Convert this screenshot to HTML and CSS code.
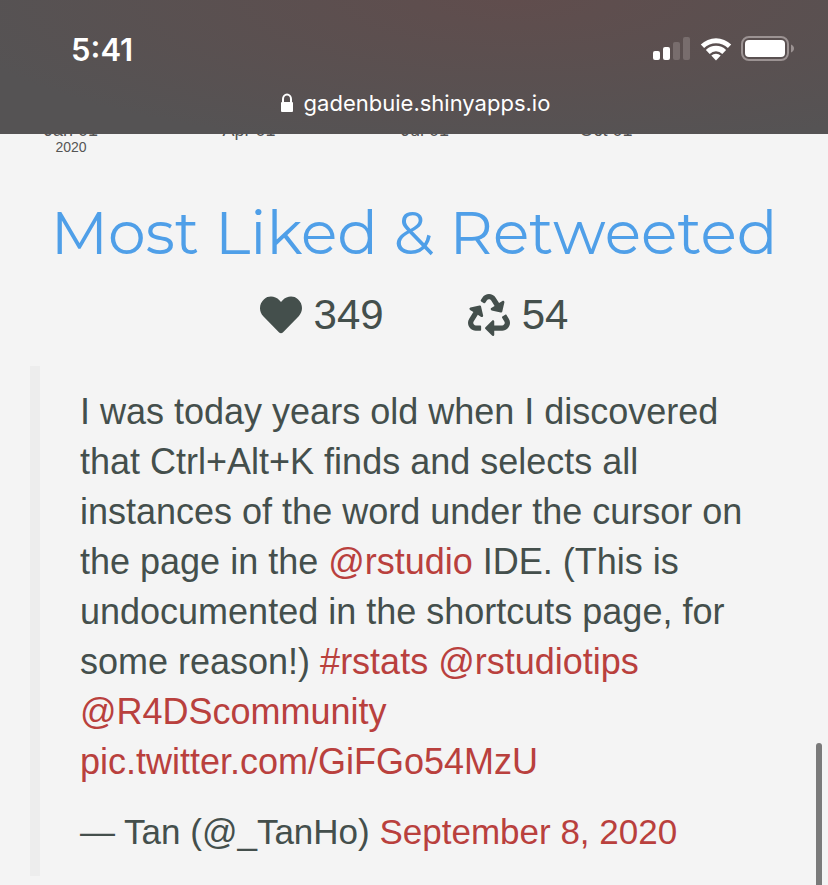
FILE: index.html
```html
<!DOCTYPE html>
<html lang="en">
<head>
<meta charset="utf-8">
<meta name="viewport" content="width=device-width, initial-scale=1">
<title>Most Liked &amp; Retweeted</title>
<link rel="stylesheet" href="styles.css">
</head>
<body>
<header class="browser">
  <div class="status">
    <time class="clock">5:41</time>
    <div class="indicators">
      <svg class="signal" viewBox="0 0 38 24" aria-hidden="true">
        <rect x="0" y="14" width="7" height="9" rx="2"/>
        <rect x="10" y="10" width="7" height="13" rx="2"/>
        <rect class="dim" x="20" y="5" width="7" height="18" rx="2"/>
        <rect class="dim" x="30" y="0" width="7" height="23" rx="2"/>
      </svg>
      <svg class="wifi" viewBox="0 0 32 24" aria-hidden="true">
        <path d="M.8 7.6a21.6 21.6 0 0 1 30.4 0l-3.3 3.5a16.9 16.9 0 0 0-23.8 0z"/>
        <path d="M5.9 12.9a14.4 14.4 0 0 1 20.2 0l-3.8 4a9 9 0 0 0-12.600 0z"/>
        <path d="M11.3 18.6a6.8 6.8 0 0 1 9.4 0L16 23.6z"/>
      </svg>
      <svg class="battery" viewBox="0 0 54 26" aria-hidden="true">
        <rect class="shell" x="1" y="1" width="46" height="23" rx="7"/>
        <rect x="4" y="4" width="40" height="17" rx="4"/>
        <path class="tip" d="M50 8.500c4 1.500 4 6.500 0 8z"/>
      </svg>
    </div>
  </div>
  <div class="address">
    <svg class="lock" viewBox="0 0 14 20" aria-hidden="true">
      <path class="shackle" d="M3 10V6a4 4.500 0 0 1 8 0v4"/>
      <rect x="1" y="9" width="12" height="10" rx="1"/>
    </svg>
    <span>gadenbuie.shinyapps.io</span>
  </div>
</header>
<main>
  <div class="axis">
    <div class="tick">Jan 01<small>2020</small></div>
    <div class="tick">Apr 01</div>
    <div class="tick">Jul 01</div>
    <div class="tick">Oct 01</div>
  </div>
  <h1>Most Liked &amp; Retweeted</h1>
  <div class="stats">
    <span class="stat">
      <svg viewBox="0 0 512 512" role="img" aria-label="Likes"><path d="M462.300 62.600C407.500 15.900 326 24.300 275.700 76.200L256 96.500l-19.700-20.300C186.100 24.300 104.500 15.900 49.700 62.600c-62.800 53.600-66.100 149.800-9.900 207.900l193.500 199.800c12.500 12.900 32.800 12.900 45.300 0l193.500-199.800c56.300-58.100 53-154.300-9.800-207.900z"/></svg>
      349
    </span>
    <span class="stat">
      <svg viewBox="0 0 512 512" role="img" aria-label="Retweets"><path d="M184.561 261.903c3.232 13.997-12.123 24.635-24.068 17.168l-40.736-25.455-50.867 81.402C55.606 356.273 70.960 384 96.012 384H148c6.627 0 12 5.373 12 12v40c0 6.627-5.373 12-12 12H96.115c-75.334 0-121.302-83.048-81.408-146.880l50.822-81.388-40.725-25.448c-12.081-7.547-8.966-25.961 4.879-29.158l110.237-25.450c8.611-1.988 17.201 3.381 19.189 11.990l25.452 110.237zm98.561-182.915l41.289 66.076-40.740 25.457c-12.051 7.528-9 25.953 4.879 29.158l110.237 25.450c8.672 1.999 17.215-3.438 19.189-11.990l25.450-110.237c3.197-13.844-11.990-24.719-24.068-17.168l-40.687 25.424-41.263-66.082c-37.521-60.033-125.209-60.171-162.816 0l-17.963 28.766c-3.510 5.620-1.800 13.021 3.820 16.533l33.919 21.195c5.620 3.512 13.024 1.803 16.536-3.817l17.961-28.743c12.712-20.341 41.973-19.676 54.257-.022zM497.288 301.120l-27.515-44.065c-3.511-5.623-10.916-7.334-16.538-3.821l-33.861 21.159c-5.620 3.512-7.330 10.915-3.818 16.536l27.564 44.112c13.257 21.211-2.057 48.960-27.136 48.960H320V336.020c0-14.213-17.242-21.383-27.313-11.313l-80 79.981c-6.249 6.248-6.249 16.379 0 22.627l80 79.989C302.689 517.308 320 510.300 320 495.989V448h95.880c75.274 0 121.335-82.997 81.408-146.880z"/></svg>
      54
    </span>
  </div>
  <blockquote>
    <p>I was today years old when I discovered that Ctrl+Alt+K finds and selects all instances of the word under the cursor on the page in the <a href="#rstudio">@rstudio</a> IDE. (This is undocumented in the shortcuts page, for some reason!) <a href="#rstats">#rstats</a> <a href="#rstudiotips">@rstudiotips</a> <a href="#community">@R4DScommunity</a> <a href="#picture">pic.twitter.com/GiFGo54MzU</a></p>
    <p class="byline">— Tan (@_TanHo) <a href="#tweet">September 8, 2020</a></p>
  </blockquote>
</main>
<div class="scroll-thumb"></div>
</body>
</html>
```
FILE: styles.css
```css
* { box-sizing: border-box; }

html { scrollbar-width: none; }

body {
  margin: 0;
  background: #f4f4f4;
  color: #444f4c;
  font-family: "Liberation Sans", Arial, sans-serif;
}

.browser {
  position: sticky;
  top: 0;
  z-index: 1;
  height: 134px;
  padding: 29px 33px 0 71px;
  background:
    radial-gradient(ellipse at 62% 0, #604d4d 0%, rgba(92, 79, 79, 0.8) 38%, rgba(86, 83, 83, 0) 80%),
    #555354;
  color: #fff;
  font-family: Inter, sans-serif;
}

.status {
  display: flex;
  justify-content: space-between;
  align-items: center;
  height: 40px;
}

.clock {
  font-size: 31px;
  font-weight: 600;
}

.indicators {
  display: flex;
  align-items: center;
  gap: 9px;
}

.indicators svg { fill: #fff; }
.signal { width: 38px; height: 24px; }
.wifi { width: 32px; height: 24px; }
.battery { width: 54px; height: 26px; }
.signal .dim { fill: #786d6d; }
.battery .shell { fill: none; stroke: #9c9393; stroke-width: 2; }
.battery .tip { fill: #9c9393; }

.address {
  display: flex;
  justify-content: center;
  align-items: center;
  gap: 10px;
  height: 40px;
  margin: 14px 0 0 -36px;
  font-size: 22px;
}

.lock { width: 14px; height: 20px; fill: #fff; }
.lock .shackle { fill: none; stroke: #fff; stroke-width: 2; }

.axis {
  display: grid;
  grid-template-columns: repeat(4, 1fr);
  justify-items: start;
  height: 44px;
  margin: -14px 70px 0 44px;
  color: #555;
  font-size: 18px;
  line-height: 20px;
}

.tick { text-align: center; }
.tick small { display: block; font-size: 14px; line-height: 14px; }

h1 {
  margin: 31px 0 0;
  color: #4f9fe8;
  font-family: Montserrat, Inter, sans-serif;
  font-size: 60px;
  font-weight: 400;
  line-height: 76px;
  text-align: center;
}

.stats {
  display: flex;
  justify-content: center;
  gap: 84px;
  margin-top: 14px;
  font-size: 42px;
  line-height: 60px;
}

.stat { display: flex; align-items: center; gap: 12px; }
.stat svg { width: 42px; height: 42px; fill: currentColor; }

blockquote {
  margin: 21px 30px 0;
  padding: 21px 40px 19px;
  border-left: 10px solid #ededed;
  font-size: 36px;
  line-height: 50px;
}

p { margin: 0 0 20px; }

.byline {
  margin: 0;
  font-size: 35px;
}

a { color: #b9403d; text-decoration: none; }

.scroll-thumb {
  position: fixed;
  top: 743px;
  right: 6px;
  bottom: 0;
  z-index: 2;
  width: 6px;
  border-radius: 3px 3px 0 0;
  background: #7a7a7a;
}
```
